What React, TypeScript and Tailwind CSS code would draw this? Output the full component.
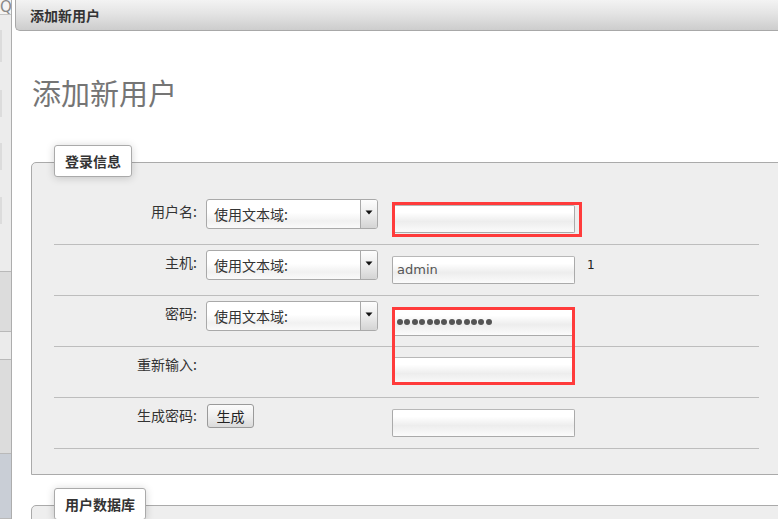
import React from "react";

const CJK = "font-['Noto_Sans_CJK_SC','Noto_Sans',sans-serif]";

function Select() {
  return (
    <div className="mt-[5px] flex h-[30px] w-[172px] overflow-hidden rounded-[3px] border border-[#a9a9a9] bg-[linear-gradient(to_bottom,#ffffff_0%,#ffffff_45%,#f1f1f1_75%,#fafafa_100%)]">
      <div className="flex flex-1 items-center pl-[7px] text-[14px] text-[#333]">使用文本域:</div>
      <div className="flex w-[17px] items-start justify-center border-l border-[#a9a9a9] bg-[linear-gradient(to_bottom,#fdfdfd_0%,#ececec_50%,#d4d4d4_100%)] pt-[10px]">
        <svg width="8" height="5" viewBox="0 0 8 5">
          <path d="M0.5 0.5 L7.5 0.5 L4 4.5 Z" fill="#111" />
        </svg>
      </div>
    </div>
  );
}

function TextInput({ children, className = "" }: { children?: React.ReactNode; className?: string }) {
  return (
    <div
      className={
        "flex h-[28px] w-[183px] items-center rounded-[2px] border border-[#aaaaaa] border-t-[#b8b8b8] bg-[linear-gradient(to_bottom,#ffffff_0%,#ffffff_25%,#ededed_60%,#fbfbfb_100%)] pl-[4px] " +
        className
      }
    >
      {children}
    </div>
  );
}

function Row({ label, children }: { label: string; children: React.ReactNode }) {
  return (
    <div className="flex h-[51px] items-start border-b border-[#bdbdbd]">
      <div className="mt-[7px] w-[143px] text-right text-[14px] leading-[20px] text-[#333]">{label}</div>
      <div className="ml-[9px] flex items-start">{children}</div>
    </div>
  );
}

function Legend({ text }: { text: string }) {
  return (
    <div className="relative z-10 -mb-[15px] ml-[23px] flex h-[32px] w-fit items-center rounded-[3px] border border-[#aaaaaa] bg-white px-[10px] text-[14px] font-bold text-[#333] shadow-[0_1px_8px_rgba(0,0,0,0.18)]">
      {text}
    </div>
  );
}

export default function App() {
  const dots = Array.from({ length: 13 });
  return (
    <div className={"relative flex h-[519px] w-[778px] overflow-hidden bg-white " + CJK}>
      {/* sidebar */}
      <div className="flex w-[12px] shrink-0 flex-col border-r border-[#adadad] bg-[#ececec]">
        <div className="h-[15px] overflow-hidden border-b border-[#c4c4c4] bg-[#f4f4f4] font-['DejaVu_Sans',sans-serif] text-[15px] leading-[15px] text-[#888]">
          Q
        </div>
        <div className="flex h-[256px] flex-col">
          <div className="mt-[15px] h-[32px] w-[2px] bg-[#dcdcdc]" />
          <div className="mt-[28px] h-[27px] w-[2px] bg-[#dcdcdc]" />
          <div className="mt-[26px] h-[27px] w-[2px] bg-[#dcdcdc]" />
          <div className="mt-[27px] h-[27px] w-[2px] bg-[#dcdcdc]" />
        </div>
        <div className="h-[60px] border-t border-[#b9b9b9] bg-[#dcdcdc]" />
        <div className="h-[28px] border-t border-[#b9b9b9] bg-[#ebebeb]" />
        <div className="h-[94px] border-t border-[#b9b9b9] bg-[#dcdcdc]" />
        <div className="flex-1 border-t border-b border-[#b9b9b9] bg-[#c9ced6]" />
      </div>

      {/* main */}
      <div className="ml-[3px] flex min-w-0 flex-1 flex-col">
        <div className="flex h-[31px] shrink-0 items-center rounded-bl-[5px] border-b border-l border-[#a8a8a8] bg-[linear-gradient(to_bottom,#f3f3f3_0%,#e4e4e4_45%,#cdcdcd_100%)] pl-[14px] text-[14px] font-bold text-[#333]">
          添加新用户
        </div>

        <div className="flex flex-col pl-[16px]">
          <h1 className="ml-[1px] mt-[43px] text-[29px] font-normal leading-[36px] text-[#757575]">添加新用户</h1>

          <div className="mt-[35px]">
            <Legend text="登录信息" />
            <div className="w-[800px] rounded-tl-[5px] border border-[#aaaaaa] bg-[#eeeeee] pb-[25px] pt-[31px]">
              <div className="ml-[22px] w-[705px]">
                <Row label="用户名:">
                  <Select />
                  <TextInput className="ml-[14px] mt-[11px]" />
                </Row>
                <Row label="主机:">
                  <Select />
                  <TextInput className="ml-[14px] mt-[11px]">
                    <span className="font-['DejaVu_Sans',sans-serif] text-[13px] text-[#555]">admin</span>
                  </TextInput>
                  <span className="ml-[12px] mt-[11px] font-['DejaVu_Sans',sans-serif] text-[12px] text-[#222]">1</span>
                </Row>
                <Row label="密码:">
                  <Select />
                  <TextInput className="ml-[14px] mt-[12px]">
                    <div className="flex gap-[1.4px]">
                      {dots.map((_, i) => (
                        <div key={i} className="h-[6px] w-[6px] rounded-full bg-[#555]" />
                      ))}
                    </div>
                  </TextInput>
                </Row>
                <Row label="重新输入:">
                  <div className="w-[172px]" />
                  <TextInput className="ml-[14px] mt-[10px]" />
                </Row>
                <Row label="生成密码:">
                  <div className="w-[172px] pl-[1px]">
                    <button className="mt-[6px] flex h-[24px] w-[47px] items-center justify-center rounded-[3px] border border-[#9a9a9a] bg-[linear-gradient(to_bottom,#fbfbfb_0%,#efefef_50%,#dadada_100%)] text-[14px] text-[#222]">
                      生成
                    </button>
                  </div>
                  <TextInput className="ml-[14px] mt-[11px]" />
                </Row>
              </div>
            </div>
          </div>

          <div className="mt-[13px]">
            <Legend text="用户数据库" />
            <div className="h-[40px] w-[800px] rounded-tl-[5px] border border-[#aaaaaa] bg-[#eeeeee]" />
          </div>
        </div>
      </div>

      {/* annotation boxes */}
      <div className="pointer-events-none absolute left-[392px] top-[202px] h-[35px] w-[190px] border-[3px] border-[#ff3b3b]" />
      <div className="pointer-events-none absolute left-[392px] top-[307px] h-[78px] w-[183px] border-[3px] border-[#ff3b3b]" />
    </div>
  );
}
